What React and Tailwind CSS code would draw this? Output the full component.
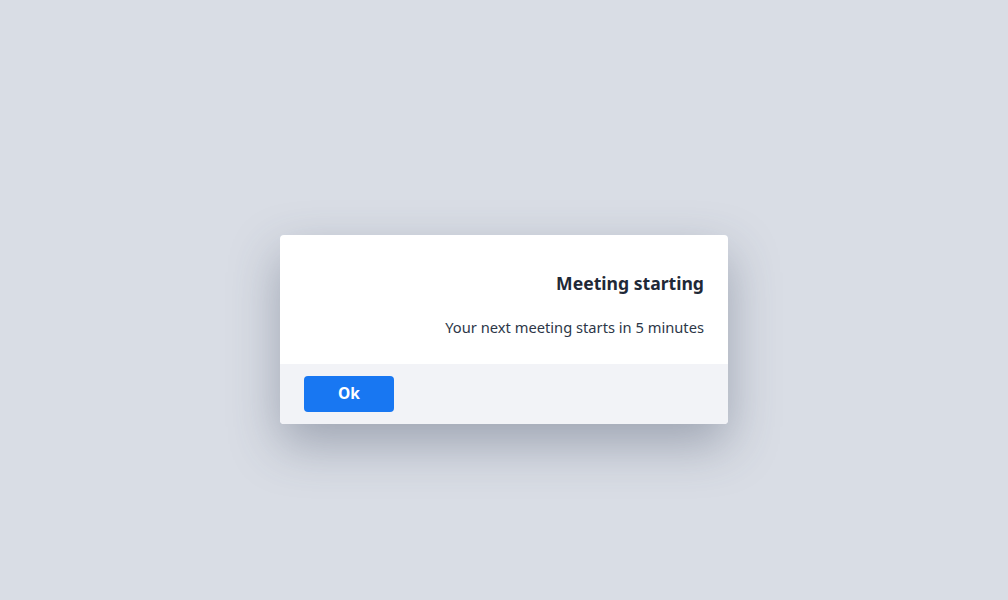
export default function App() {
  return (
    <div className="min-h-screen w-full bg-[#d9dde5] flex items-center justify-center font-['Noto_Sans',sans-serif]">
      <div className="w-[448px] mt-[59px] bg-white rounded-[4px] overflow-hidden shadow-[0_20px_50px_rgba(60,72,95,0.38)]">
        <div className="flex flex-col items-end px-6 pt-[34px] pb-[25px] gap-[18px] text-right">
          <h2 className="text-[17.6px] leading-[28px] font-bold text-[#1f2937]">Meeting starting</h2>
          <p className="text-[14.7px] leading-[24px] text-[#2d3748]">Your next meeting starts in 5 minutes</p>
        </div>
        <div className="bg-[#f2f3f7] px-6 py-3 flex">
          <button className="w-[90px] h-9 rounded-[4px] bg-[#1877f2] text-white font-bold text-[15.5px]">Ok</button>
        </div>
      </div>
    </div>
  );
}
